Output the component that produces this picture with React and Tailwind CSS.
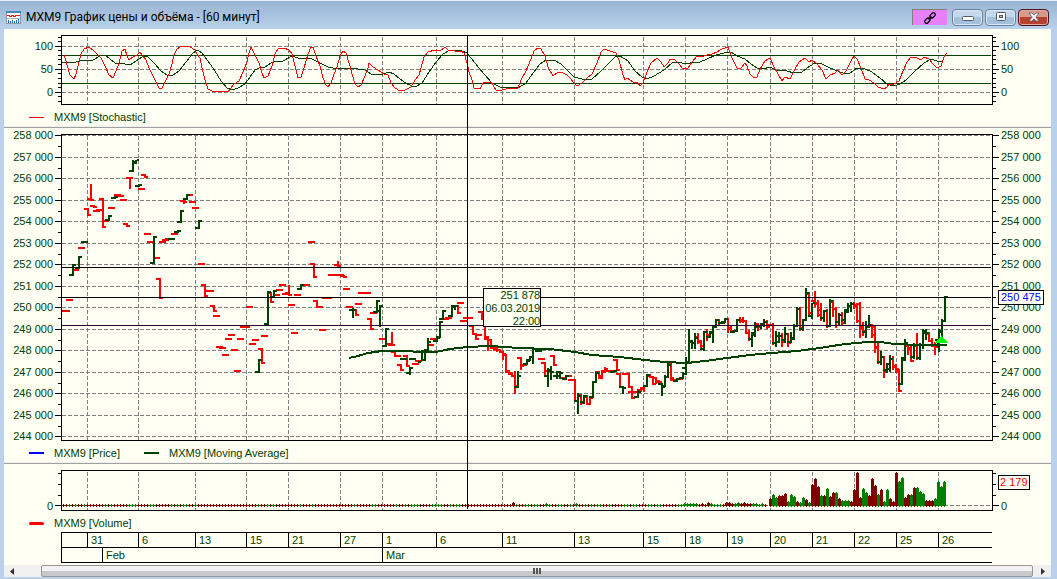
import React from "react";

const days = [
  { x: 61, label: "" },
  { x: 87, label: "31" },
  { x: 138, label: "6" },
  { x: 195, label: "13" },
  { x: 246, label: "15" },
  { x: 288, label: "21" },
  { x: 340, label: "27" },
  { x: 382, label: "1" },
  { x: 436, label: "6" },
  { x: 502, label: "11" },
  { x: 574, label: "13" },
  { x: 643, label: "15" },
  { x: 685, label: "18" },
  { x: 727, label: "19" },
  { x: 770, label: "20" },
  { x: 812, label: "21" },
  { x: 854, label: "22" },
  { x: 896, label: "25" },
  { x: 938, label: "26" },
];

const months = [
  { x: 61, label: "" },
  { x: 102, label: "Feb" },
  { x: 382, label: "Mar" },
];

const priceLabels = [
  "258 000", "257 000", "256 000", "255 000", "254 000", "253 000", "252 000", "251 000",
  "250 000", "249 000", "248 000", "247 000", "246 000", "245 000", "244 000",
];

const fastLine =
  "64,55 65,58 68,68 70,75 74,79 76,74 78,66 81,54 84,49 89,47 93,50 97,54 101,58 105,66 109,75 113,78 116,71 119,63 122,51 125,49 127,56 129,60 133,57 137,55 140,52 143,56 146,60 149,68 153,76 156,82 159,88 162,88 165,82 169,74 172,64 174,55 177,49 180,47 184,46 190,47 195,50 197,54 200,58 202,68 205,80 208,89 212,91 220,91 228,92 230,89 234,84 239,81 243,72 247,62 249,53 251,47 254,53 259,63 262,73 264,78 268,76 272,66 275,54 278,49 284,48 289,50 292,54 295,66 298,78 301,77 304,68 308,54 311,47 313,47 316,56 320,66 323,78 326,85 328,87 331,83 334,74 337,67 340,56 343,51 346,53 349,63 350,66 352,74 355,84 358,87 361,85 365,76 368,68 369,63 373,67 378,70 384,74 388,75 391,83 395,88 400,91 405,90 411,87 415,80 419,75 421,68 424,57 428,52 435,50 440,51 445,47 448,50 455,51 461,51 464,53 467,63 469,72 472,80 474,88 480,89 483,83 491,82 496,90 502,90 510,88 518,88 521,80 526,71 531,59 534,51 538,48 541,49 545,56 548,67 553,76 557,73 561,72 567,75 571,79 574,83 577,86 582,83 587,78 592,74 597,63 601,52 604,49 610,51 616,53 619,60 623,75 625,80 627,78 633,82 638,83 640,86 643,83 647,72 651,63 657,58 661,62 664,67 668,63 670,59 675,60 680,65 682,68 688,68 692,62 697,56 701,57 707,55 712,54 717,52 722,49 728,47 732,58 737,68 741,68 745,63 747,66 750,74 754,78 757,77 760,69 765,61 770,58 774,67 778,74 782,81 785,77 790,79 794,71 799,62 805,58 809,62 812,60 817,64 822,70 826,79 830,75 835,73 838,70 842,75 846,71 851,61 854,56 857,59 861,68 865,79 869,80 874,83 878,87 884,89 887,87 889,84 894,84 899,81 903,71 907,62 911,57 917,58 921,60 924,57 929,59 933,64 937,68 941,66 944,57 947,53";

const slowLine =
  "61,62 76,62 82,60 93,60 100,56 105,55 110,59 115,63 120,63 130,65 136,61 142,57 147,56 154,63 161,71 167,75 173,75 179,71 186,62 193,53 198,50 202,53 208,61 215,71 221,81 227,88 232,90 238,88 245,84 250,77 255,70 259,68 265,67 271,63 276,61 283,61 292,56 298,58 312,59 320,63 328,67 338,69 350,68 365,70 371,74 377,75 383,74 389,72 394,74 400,79 407,84 415,87 422,83 429,72 436,62 443,54 450,50 462,51 467,53 475,63 484,74 492,83 500,87 518,88 526,83 533,73 540,64 546,60 554,60 561,64 568,71 574,77 582,79 592,79 600,72 608,64 615,57 620,56 628,61 635,71 642,77 647,79 654,76 664,70 672,63 678,62 686,64 694,62 700,62 707,59 716,55 724,53 731,52 737,56 745,59 751,64 757,68 763,69 770,67 776,70 787,71 794,73 802,72 810,66 815,63 822,64 830,68 838,71 845,74 850,73 857,68 865,69 872,72 880,78 887,84 894,86 900,84 906,80 915,71 924,63 931,59 937,61 942,62";

const averageLine =
  "349,358 358,356 368,353 382,351 405,351 420,352 436,352 450,349 467,347 490,346 505,347 518,348 550,349 575,352 592,355 620,357 645,360 665,362 687,363 705,361 727,358 750,355 772,353 797,351 820,348 845,344 868,342 880,342 895,344 920,345 947,345";

// x, open, high, low, close
const redBars =
  "63,311 66,311 69,300 75,270 81,248 87,209,209,215,215 90,199,185,200,200 93,206,206,207,207 96,211 99,210 102,199,199,227,227 105,221 111,208 117,195 120,196 123,200 126,224,224,226,226 129,178,178,188,178 141,189 144,175,175,177,177 147,234 150,242 156,258 159,279,279,298,298 162,242 165,240 168,239 174,234 183,201,201,203,202 189,195 192,202 195,208 201,264 204,285,285,296,296 207,291 210,291 213,306,306,311,311 216,316 219,347 222,348 225,355 228,339 231,335 234,350 237,371 240,339 243,327 246,327 249,307 252,344 255,340 261,349,349,363,363 264,336 270,293,293,302,302 276,295 279,290 282,285 285,294 288,293,286,295,295 291,305 294,333 297,295 303,285 306,285 311,242 313,264,264,277,277 316,301,301,307,307 319,307 322,330 325,298 328,298 331,275 334,275 337,265,262,266,266 340,275 343,276,276,277,277 346,289 349,307 355,310,310,315,315 358,304 361,293 364,293 367,293 370,319,319,329,329 373,313 382,339 388,344 391,345,333,345,345 394,352,352,356,356 397,356 400,365,365,370,370 406,356,356,366,366 415,364 418,361 430,345 433,339 445,319 448,318 457,306,306,313,313 460,303 463,321 466,318 469,318 472,326,326,334,334 475,334,334,339,339 478,335 481,312,312,318,318 484,319,319,339,339 487,337,337,350,346 490,340,340,348,348 493,347,347,350,349 496,348,348,351,350 499,350,350,352,352 502,352,352,359,354 505,355,355,372,372 508,371,371,373,373 511,374,374,376,376 514,376,372,393,386 520,358,358,369,366 523,365 535,349,349,351,351 541,359 544,363,363,375,371 553,356,356,365,365 562,378 568,376 571,380 574,380,380,401,401 580,395,395,404,403 586,397,396,404,404 589,404,397,404,398 598,372,372,378,378 601,376,372,378,372 604,371,368,372,369 607,371 610,371 616,360,360,370,370 619,374,374,387,387 625,374 628,374,374,387,387 631,392,387,398,398 634,392 640,390,388,391,388 643,389,386,391,386 649,376,375,377,377 652,377,377,384,384 655,378,378,383,382 658,381,381,382,382 670,363,363,378,378 673,380 679,379 697,337,334,343,342 700,341,341,347,346 706,332,330,340,335 718,320,320,324,323 727,319,319,332,329 730,328,327,332,331 739,320,318,322,321 742,320,318,322,321 745,321,321,333,333 748,333,331,340,339 757,324,324,330,327 766,322,321,328,327 769,325 772,325,324,344,343 781,336,334,346,342 787,334,334,346,343 799,309,308,330,328 808,294,293,314,313 814,301,292,306,304 817,303,301,316,315 820,310,304,320,318 826,311,310,327,326 832,302,301,316,309 835,309,308,327,322 841,315,313,325,323 853,304,303,308,306 856,305,305,322,321 859,304,303,337,328 862,327,323,335,331 871,326,325,337,335 874,327,326,352,348 877,347,344,363,362 883,357,357,377,372 892,359,357,369,367 895,366,365,372,369 898,371,370,391,391 907,346,345,354,349 910,348,346,361,361 916,346,334,359,358 928,334,333,341,341 931,341,339,346,345 934,346,343,354,347";

const greenBars =
  "72,275,265,275,265 78,268,257,268,257 84,242 108,220,216,220,216 114,198,197,198,197 132,171,161,171,162 135,163,161,163,160 138,186,185,186,185 153,263,237,263,237 171,239 177,232,231,232,231 180,222,211,222,211 186,199,195,199,195 198,228,221,228,221 258,372,360,372,360 267,324,292,324,292 273,297,291,297,291 300,289,285,289,285 352,310,309,317,310 376,312,301,312,301 379,311,306,326,306 385,346,329,346,329 403,359 409,373,368,374,368 412,359 421,362,351,360,351 424,360,350,360,350 427,350,339,350,342 436,341,338,341,338 439,337,322,337,322 442,319,311,319,311 451,316,307,316,307 454,306,306,309,306 517,387,372,387,376 526,364,361,364,361 529,360,357,360,357 532,357,348,363,349 538,351 547,376,369,386,370 550,371,367,379,372 556,376,372,378,372 559,376,372,378,373 565,379,376,379,376 577,401,394,413,396 583,402,396,403,396 592,397,382,397,382 595,382,373,382,373 613,372,371,372,371 622,387,387,393,388 637,397,391,397,392 646,386,375,386,375 661,384,384,395,387 664,386,376,386,377 667,377,364,377,365 676,381,379,381,379 682,378,373,378,374 685,368,358,374,362 688,363,330,363,341 691,342,341,348,343 694,343,334,348,338 703,349,332,350,332 709,337,333,337,333 712,332,326,342,327 715,327,320,327,320 721,323 724,322,319,322,319 733,332,331,332,331 736,331,320,331,320 751,339,333,346,333 754,335,323,336,327 760,326,324,328,324 763,324,320,326,322 775,343,332,346,336 778,342,333,342,336 784,340,328,342,334 790,342,333,342,338 793,339,325,339,326 796,326,308,326,309 802,329,320,330,320 805,320,289,320,293 811,316,304,318,303 823,318,311,321,311 829,326,300,326,301 838,322,314,324,315 844,320,311,323,312 847,310,304,312,306 850,306,303,311,304 865,332,322,337,327 868,327,316,327,325 880,362,352,364,357 886,370,364,372,364 889,369,356,371,359 901,384,358,384,358 904,360,340,360,343 913,357,344,358,345 919,358,344,359,345 922,345,330,348,331 925,333,330,339,333 937,345,341,346,341 938,340,330,351,331 941,332,320,342,321 944,321,297,321,297";

// one letter per bar, R falling and G rising
const quietBars = [
  "RRGRGRRGRRRRRRGRGRRRRRGGGRRRRGGRRRRRGRGRGGRRGRRRRRRRRRRRRRRRRRRRRGRRGRGRRRRRRRRGRR",
  "RGRRRRRRRRRRRRRGRRRRRGGRRRRRRGRRGRGGGRRRRGGGGRRGRGGRRRRRRRRRRRRRRRRRRGRRGGRGGRRGG",
  "RRGGRRGRGRRGRGRGGRRGRRRRGGRGGRRRGGRGGRRRRRGG",
].join("");

const quietPeaks = { 150: 3, 161: 2, 171: 2 };

const smallVolume =
  "G2 G2 G2 G2 G2 R1 R2 R1 R3 G2 G1 G1 G1 R1 R3 R3 R2 G2 G3 R2 R3 R2 R2 G2 G2 G1 G2 R1".split(" ");

const loudVolume =
  "R7 G11 G8 R10 R10 R12 G4 G11 G9 R4 G3 G8 R6 G3 R21 R27 R19 G10 R10 G17 R9 R13 G13 R7 G5 G5 G5 R4 R16 R33 R8 G17 G13 R10 R27 R20 G11 R16 G4 G16 R7 R4 R33 G24 G28 R8 R11 G11 R18 G18 G14 G12 R5 R5 R5 G7 G24 G19 G24".split(" ");

const barPath = (text) =>
  text
    .split(" ")
    .map((item) => {
      const [x, open, high = open, low = open, close = open] = item.split(",").map(Number);
      return `M${x - 3} ${open - 1}h3v2h-3zM${x} ${high - 1}h2V${low + 1}h-2zM${x + 2} ${close - 1}h2v2h-2z`;
    })
    .join("");

const volumeBars = [
  ...quietBars.split("").map((c, i) => ({ x: 63 + i * 3, up: c === "G", h: quietPeaks[i] || 1 })),
  ...smallVolume.map((v, i) => ({ x: 684 + i * 3, up: v[0] === "G", h: Number(v[1]) })),
  ...loudVolume.map((v, i) => ({ x: 770 + i * 3, up: v[0] === "G", h: Number(v.slice(1)) })),
];

const volumePath = (up) =>
  volumeBars
    .filter((b) => b.up === up)
    .map((b) =>
      b.h > 1
        ? `M${b.x - 1} ${506 - b.h}h1v-1h1v1h1V506h-1v1h-1v-1h-1z`
        : `M${b.x - 1} 505h1v-1h1v1h1v1h-1v1h-1v-1h-1z`
    )
    .join("");

const GridLines = ({ top, bottom, rows }) => (
  <g stroke="#808080" strokeDasharray="4 2" fill="none">
    {days.slice(1).map((d) => (
      <path key={d.x} d={`M${d.x}.5 ${top}V${bottom}`} />
    ))}
    {rows.map((y) => (
      <path key={y} d={`M62 ${y + 0.5}H991`} />
    ))}
  </g>
);

const Plot = ({ top, height, children, className }) => (
  <svg
    viewBox={`61 ${top} 932 ${height}`}
    preserveAspectRatio="none"
    shapeRendering="crispEdges"
    className={`block w-full ${className}`}
  >
    {children}
  </svg>
);

const Ticks = ({ top, height, major, minor, side, className }) => (
  <svg
    viewBox={`0 ${top} 8 ${height}`}
    shapeRendering="crispEdges"
    className={`block w-2 shrink-0 ${className}`}
  >
    {major.map((y) => (
      <rect key={y} x={side === "left" ? 2 : 0} y={y} width="6" height="1" />
    ))}
    {minor.map((y) => (
      <rect key={y} x={side === "left" ? 5 : 0} y={y} width="3" height="1" />
    ))}
  </svg>
);

const Legend = ({ color, children }) => (
  <div className="flex items-center gap-2.5">
    <span className={`w-[15px] ${color}`} />
    <span>{children}</span>
  </div>
);

const Divider = () => <div className="h-0.5 border-b border-[#a0a0a0] bg-[#f0f0f0]" />;

const priceRows = priceLabels.map((_, i) => Math.round(135 + i * 21.5));
const priceMinor = priceRows.slice(0, 14).map((y) => y + 11);
const stochMinor = [37, 41, 50, 55, 59, 64, 73, 78, 83, 87, 96, 101];

const TitleBar = () => (
  <header className="flex h-[29px] items-center gap-1 border-t border-[#e4eef8] bg-linear-to-b from-[#98b4d2] to-[#b9d1ea] pr-2 pl-1.5">
    <svg viewBox="0 0 15 13" className="mt-1 h-[13px] w-[15px]" shapeRendering="crispEdges">
      <rect width="15" height="13" fill="#8a9aaa" />
      <rect x="1" y="2" width="13" height="10" fill="#fff" />
      <rect width="15" height="2" fill="#3590c0" />
      <path d="M1 4h2v1h2v-1h2v1h2v-1h5" stroke="#e02020" fill="none" />
      <path d="M1 7.5h13" stroke="#b0b0b0" />
      <path d="M2.5 12v-3M4.5 12v-2M6.5 12v-3M8.5 12v-2M10.5 12v-3M12.5 12v-4" stroke="#2070c0" />
    </svg>
    <h1 className="mt-1 ml-px flex-1 font-[Roboto,'Open_Sans',sans-serif] text-[12px] leading-4 whitespace-nowrap text-black">
      MXM9 График цены и объёма - [60 минут]
    </h1>
    <button
      aria-label="Link window"
      className="mt-1 flex h-4 w-[35px] items-center justify-center border-t border-l border-[#808080] bg-[#e680ff]"
    >
      <svg viewBox="0 0 12 12" className="h-3 w-3" fill="none" stroke="#000" strokeWidth="1.2">
        <rect x="-3" y="-1.8" width="6" height="3.6" rx="1.8" transform="translate(3.4 8.6) rotate(-45)" />
        <rect x="-3" y="-1.8" width="6" height="3.6" rx="1.8" transform="translate(8.6 3.4) rotate(-45)" />
        <path d="M4.5 7.5l3-3" />
      </svg>
    </button>
    <button
      aria-label="Minimize"
      className="mt-1 ml-px flex h-[17px] w-[31px] items-center justify-center rounded-sm border border-[#6681a0] bg-linear-to-b from-[#c5d8ec] from-50% to-[#a5c0dc] to-50% shadow-[inset_0_0_0_1px_#dbe8f5]"
    >
      <svg viewBox="0 0 12 6" className="mt-1 h-1.5 w-3">
        <rect x="0.5" y="0.5" width="11" height="4" rx="1" fill="#fff" stroke="#555b66" />
      </svg>
    </button>
    <button
      aria-label="Restore"
      className="mt-1 -ml-0.5 flex h-[17px] w-[31px] items-center justify-center rounded-sm border border-[#6681a0] bg-linear-to-b from-[#c5d8ec] from-50% to-[#a5c0dc] to-50% shadow-[inset_0_0_0_1px_#dbe8f5]"
    >
      <svg viewBox="0 0 12 10" className="h-2.5 w-3">
        <rect x="1.5" y="0.5" width="9" height="8" rx="1" fill="#fff" stroke="#555b66" />
        <rect x="4.5" y="3.5" width="3" height="2" fill="#a5c0dc" stroke="#555b66" />
      </svg>
    </button>
    <button
      aria-label="Close"
      className="mt-1 -ml-0.5 flex h-[17px] w-[31px] items-center justify-center rounded-sm border border-[#4a1420] bg-linear-to-b from-[#d9988c] from-50% to-[#b8402c] to-50% shadow-[inset_0_0_0_1px_#e3aaa0]"
    >
      <svg viewBox="0 0 12 10" className="h-2.5 w-3">
        <path d="M1 1h3l2 2.2L8 1h3L7.8 5 11 9H8L6 6.8 4 9H1l3.2-4z" fill="#fff" stroke="#555b66" strokeWidth="0.8" />
      </svg>
    </button>
  </header>
);

const StochasticPane = () => (
  <section className="h-[97px]">
    <div className="grid grid-cols-[57px_minmax(0,1fr)_58px]">
      <div className="flex justify-end">
        <div className="mt-2.5 flex h-[60px] flex-col justify-between text-right leading-[14px]">
          <span>100</span>
          <span>50</span>
          <span>0</span>
        </div>
        <Ticks top={29} height={78} major={[46, 69, 92]} minor={stochMinor} side="left" className="h-[78px]" />
      </div>
      <Plot top={29} height={78} className="h-[78px]">
        <GridLines top={37} bottom={104} rows={[46, 69, 92]} />
        <path d="M62 55.5H991M62 83.5H991" stroke="#004000" />
        <polyline points={slowLine} fill="none" stroke="#004000" />
        <polyline points={fastLine} fill="none" stroke="#ff0000" />
        <path d="M61.5 35.5H992.5V104.5H61.5z" fill="none" stroke="#000" />
      </Plot>
      <div className="flex">
        <Ticks top={29} height={78} major={[46, 69, 92]} minor={stochMinor} side="right" className="h-[78px]" />
        <div className="mt-2.5 flex h-[60px] flex-col justify-between leading-[14px]">
          <span>100</span>
          <span>50</span>
          <span>0</span>
        </div>
      </div>
    </div>
    <div className="flex pt-[3px] pl-[25px] leading-[14px]">
      <Legend color="h-px bg-[#ff0000]">MXM9 [Stochastic]</Legend>
    </div>
  </section>
);

const PricePane = () => (
  <section className="h-[334px]">
    <div className="grid grid-cols-[57px_minmax(0,1fr)_58px]">
      <div className="flex justify-end">
        <div className="flex h-[315px] flex-col justify-between text-right leading-[14px]">
          {priceLabels.map((label) => (
            <span key={label}>{label}</span>
          ))}
        </div>
        <Ticks top={128} height={316} major={priceRows} minor={priceMinor} side="left" className="h-[316px]" />
      </div>
      <div className="relative">
        <Plot top={128} height={316} className="h-[316px]">
          <GridLines top={136} bottom={440} rows={priceRows} />
          <path d={barPath(redBars)} fill="#ff0000" />
          <path d={barPath(greenBars)} fill="#004000" />
          <polyline points={averageLine} fill="none" stroke="#004000" strokeWidth="2" />
          <path d="M62 267.5H991M62 297.5H991" stroke="#000" />
          <path d="M62 325.5H991" stroke="#300030" />
          <path d="M935 343l6-7h1l6 7z" fill="#00ff00" />
          <path d="M61.5 134.5H992.5V440.5H61.5z" fill="none" stroke="#000" />
        </Plot>
        <div className="absolute top-40 left-[45.3%] z-10 flex h-[39px] w-[58px] flex-col border border-black bg-[#fffff4] text-right leading-[13px] whitespace-nowrap">
          <span>251 878</span>
          <span>06.03.2019</span>
          <span>22:00</span>
        </div>
      </div>
      <div className="relative flex">
        <Ticks top={128} height={316} major={priceRows} minor={priceMinor} side="right" className="h-[316px]" />
        <div className="flex h-[315px] flex-col justify-between leading-[14px]">
          {priceLabels.map((label) => (
            <span key={label}>{label}</span>
          ))}
        </div>
        <div className="absolute top-[162px] left-[5px] border border-black bg-[#fffff4] px-0.5 leading-[13px] whitespace-nowrap text-[#0000ff]">
          250 475
        </div>
      </div>
    </div>
    <div className="flex gap-6 pt-0.5 pl-[25px] leading-[14px]">
      <Legend color="h-0.5 bg-[#0000ff]">MXM9 [Price]</Legend>
      <Legend color="h-0.5 bg-[#004000]">MXM9 [Moving Average]</Legend>
    </div>
  </section>
);

const VolumePane = () => (
  <section>
    <div className="grid grid-cols-[57px_minmax(0,1fr)_58px]">
      <div className="flex justify-end">
        <span className="self-end leading-[14px]">0</span>
        <Ticks top={464} height={49} major={[505]} minor={[473, 484, 495]} side="left" className="h-[49px]" />
      </div>
      <Plot top={464} height={49} className="h-[49px]">
        <GridLines top={472} bottom={510} rows={[505]} />
        <path d={volumePath(false)} fill="#800000" />
        <path d={volumePath(true)} fill="#008000" />
        <path d="M61.5 470.5H992.5V510.5H61.5z" fill="none" stroke="#000" />
      </Plot>
      <div className="relative flex">
        <Ticks top={464} height={49} major={[505]} minor={[473, 484, 495]} side="right" className="h-[49px]" />
        <span className="self-end leading-[14px]">0</span>
        <div className="absolute top-[11px] left-[5px] border border-black bg-[#fffff4] px-px leading-[13px] whitespace-nowrap text-[#ff0000]">
          2 179
        </div>
      </div>
    </div>
    <div className="flex h-[19px] items-start pt-[3px] pl-[25px] leading-[14px]">
      <Legend color="h-[3px] rounded-sm bg-[#ff0000]">MXM9 [Volume]</Legend>
    </div>
  </section>
);

const DateRow = ({ cells }) => (
  <div className="flex h-[15px] border-b border-black leading-[14px]">
    {cells.map((cell, i) => {
      const end = i + 1 < cells.length ? cells[i + 1].x : 992;
      return (
        <div key={cell.x} className="border-l border-black pl-[3px]" style={{ width: `${((end - cell.x) / 931) * 100}%` }}>
          {cell.label}
        </div>
      );
    })}
  </div>
);

const ScrollBar = () => (
  <div className="mt-0.5 flex h-3 items-stretch bg-[#f0f0f0]">
    <button aria-label="Scroll left" className="flex w-[37px] items-center pl-1.5">
      <svg viewBox="0 0 4 7" className="h-[7px] w-1">
        <path d="M4 0v7L0 3.5z" fill="#333" />
      </svg>
    </button>
    <div className="flex flex-1 items-center justify-center gap-px rounded-xs border border-[#979797] bg-linear-to-b from-[#f2f2f2] from-50% to-[#c8c8cb] to-50%">
      <span className="h-1.5 w-0.5 bg-[#555]" />
      <span className="h-1.5 w-0.5 bg-[#555]" />
      <span className="h-1.5 w-0.5 bg-[#555]" />
    </div>
    <button aria-label="Scroll right" className="flex w-[18px] items-center pl-2">
      <svg viewBox="0 0 4 7" className="h-[7px] w-1">
        <path d="M0 0v7l4-3.5z" fill="#333" />
      </svg>
    </button>
  </div>
);

const App = () => {
  return (
    <div className="min-h-screen bg-[#b9d1ea] font-['Liberation_Sans',Arial,sans-serif] text-[11px] text-[#004000]">
      <TitleBar />
      <main className="relative mr-1.5 ml-1 bg-[#fffff4]">
        <StochasticPane />
        <Divider />
        <PricePane />
        <Divider />
        <VolumePane />
        <div className="mr-[59px] ml-[57px] border-t border-black">
          <DateRow cells={days} />
          <DateRow cells={months} />
        </div>
        <ScrollBar />
        <div className="pointer-events-none absolute top-1.5 right-[58px] left-[57px] h-[474px]">
          <div className="ml-[43.56%] h-full w-px bg-black" />
        </div>
      </main>
    </div>
  );
};

export default App;
